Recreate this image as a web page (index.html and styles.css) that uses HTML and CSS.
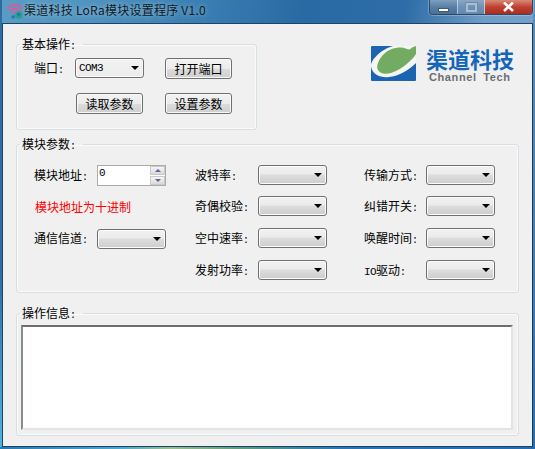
FILE: index.html
```html
<!DOCTYPE html>
<html lang="zh-CN">
<head>
<meta charset="utf-8">
<title>渠道科技 LoRa模块设置程序 V1.0</title>
<link rel="stylesheet" href="styles.css">
</head>
<body>
<div class="window">
  <header class="titlebar">
    <svg class="app-icon" width="17" height="16" viewBox="0 0 17 16">
      <g fill="none" stroke="#ee4f96" stroke-width="1.7" stroke-linecap="round">
        <path d="M1 5C4 1 12 1 15 5"/>
        <path d="M3.500 7.500C6 5 10 5 12.500 7.500"/>
        <path d="M6 10C7 9 9 9 10 10"/>
      </g>
      <circle cx="12" cy="12" r="3.800" fill="#25a08e"/>
      <path d="M10 10.500h3v2h-2z" fill="#2d5fa8"/>
      <path d="M4.500 12.500h3.500v3h-3.500z" fill="#1f7fa8"/>
    </svg>
    <span class="title">渠道科技 LoRa模块设置程序 V1.0</span>
    <div class="caption">
      <div class="cap cap-min"><i class="min-glyph"></i></div>
      <div class="cap cap-max"><i class="max-glyph"></i></div>
      <div class="cap cap-close"><svg width="13" height="10" viewBox="0 0 13 10"><path d="M2 0.500L11 9M11 0.500L2 9" stroke="#fff" stroke-width="2.600"/></svg></div>
    </div>
  </header>

  <main class="client">
    <div class="top-row">
      <fieldset class="group group-basic">
        <legend>基本操作<span class="lat">:</span></legend>
        <div class="basic-grid">
          <label>端口<span class="lat">:</span></label>
          <div class="combo"><span class="combo-text">COM3</span><i class="arrow"></i></div>
          <button class="btn btn-open">打开端口</button>
          <button class="btn btn-read">读取参数</button>
          <button class="btn btn-set">设置参数</button>
        </div>
      </fieldset>
      <div class="logo">
        <svg class="logo-mark" width="45" height="35" viewBox="0 0 45 35">
          <path d="M1 0H45V34a1 1 0 0 1-1 1H1a1 1 0 0 1-1-1V1a1 1 0 0 1 1-1Z" fill="#1b64b4"/>
          <path d="M22 0C11 3 0 13 0 20C1 29 10 32 18 31C28 30 38 24 45 17V0Z" fill="#f4f6f2"/>
          <path d="M7 17C10 9 17 3 25 2C30 1 34 2 36 3C38 4 40 3 41 1.500L45 0V8C41 14 32 23 20 27C13 29 8 27 6.500 23C6 21 6.200 19 7 17Z" fill="#74ab63"/>
        </svg>
        <div class="logo-text">
          <div class="logo-cn">渠道科技</div>
          <div class="logo-en">Channel Tech</div>
        </div>
      </div>
    </div>

    <fieldset class="group group-params">
      <legend>模块参数<span class="lat">:</span></legend>
      <div class="param-cols">
        <div class="param-col col-a">
          <label>模块地址<span class="lat">:</span></label>
          <div class="spin">
            <span class="spin-value">0</span>
            <div class="spin-btns">
              <div class="spin-btn"><i class="tri-up"></i></div>
              <div class="spin-btn"><i class="tri-down"></i></div>
            </div>
          </div>
          <div class="hint">模块地址为十进制</div>
          <label>通信信道<span class="lat">:</span></label>
          <div class="combo combo-end"><i class="arrow"></i></div>
        </div>
        <div class="param-col col-b">
          <label>波特率<span class="lat">:</span></label>
          <div class="combo"><i class="arrow"></i></div>
          <label>奇偶校验<span class="lat">:</span></label>
          <div class="combo"><i class="arrow"></i></div>
          <label>空中速率<span class="lat">:</span></label>
          <div class="combo"><i class="arrow"></i></div>
          <label>发射功率<span class="lat">:</span></label>
          <div class="combo"><i class="arrow"></i></div>
        </div>
        <div class="param-col col-c">
          <label>传输方式<span class="lat">:</span></label>
          <div class="combo"><i class="arrow"></i></div>
          <label>纠错开关<span class="lat">:</span></label>
          <div class="combo"><i class="arrow"></i></div>
          <label>唤醒时间<span class="lat">:</span></label>
          <div class="combo"><i class="arrow"></i></div>
          <label><span class="lat-wide">IO</span>驱动<span class="lat">:</span></label>
          <div class="combo"><i class="arrow"></i></div>
        </div>
      </div>
    </fieldset>

    <fieldset class="group group-log">
      <legend>操作信息<span class="lat">:</span></legend>
      <textarea class="log" aria-label="操作信息"></textarea>
    </fieldset>
  </main>
</div>
</body>
</html>
```

FILE: styles.css
```css
* { box-sizing: border-box; }
html, body { margin: 0; padding: 0; }
body {
  width: 535px;
  height: 449px;
  overflow: hidden;
  font-family: "Noto Sans CJK SC", "Liberation Sans", sans-serif;
  font-size: 12px;
  color: #000;
}
.window {
  width: 535px;
  height: 449px;
  display: flex;
  flex-direction: column;
  padding: 0 2px 2px;
  background:
    linear-gradient(90deg, #2a78ae 0, #4aa8cf 120px, #9dbf8a 170px, #5f9c78 240px, #2a76b4 340px, #1f6cb4 100%) bottom / 100% 2px no-repeat,
    linear-gradient(180deg, #2c6da3 0, #2c6da3 60%, #52b4dc 100%) left / 2px 100% no-repeat,
    linear-gradient(180deg, #5d8fb8 0, #2a6fae 100%) right / 2px 100% no-repeat,
    linear-gradient(100deg, #5b9cc4 0, #4f93c0 90px, #3a7eb2 200px, #2a6aa4 300px, #2d6ca6 400px, #6f9cc6 480px, #7ba4cb 100%);
}
.titlebar {
  height: 23px;
  flex: none;
  display: flex;
  align-items: flex-start;
  margin: 0 -2px;
  padding-left: 7px;
}
.app-icon { margin-top: 3px; flex: none; }
.title {
  line-height: 20px;
  letter-spacing: .25px;
  color: #0c1a26;
  text-shadow: 0 0 5px rgba(255, 255, 255, .55);
  white-space: nowrap;
}
.caption {
  margin-left: auto;
  margin-right: 2px;
  display: flex;
  height: 15px;
  border: 1px solid #2b4a6b;
  border-top: 0;
  border-radius: 0 0 4px 4px;
  overflow: hidden;
  box-shadow: 0 0 0 1px rgba(255, 255, 255, .25);
}
.cap {
  height: 14px;
  display: flex;
  align-items: center;
  justify-content: center;
  border-right: 1px solid rgba(255, 255, 255, .55);
}
.cap-min { width: 28px; background: linear-gradient(180deg, #7f9fbe, #577fa6 50%, #4a7098); }
.cap-max { width: 27px; background: linear-gradient(180deg, #8aa8c6, #6d92b6 50%, #6388ae); }
.cap-close { width: 47px; border-right: 0; background: linear-gradient(180deg, #d88a78, #c0402e 50%, #a82e22); }
.min-glyph { width: 11px; height: 4px; margin-top: 5px; background: #fff; border: 1px solid #44586e; display: block; }
.max-glyph { width: 11px; height: 9px; border: 2px solid #a9bdd2; outline: 1px solid #6e8cab; display: block; }

.client {
  flex: 1;
  display: flex;
  flex-direction: column;
  padding: 12px 13px 0;
  background: #f0f0f0;
  border: 1px solid #1d4468;
  border-right-color: #163a5c;
}
.top-row { display: flex; align-items: flex-start; }

.group {
  margin: 0;
  padding: 0;
  min-width: 0;
  border: 1px solid #d6dfe6;
  border-radius: 3px;
  box-shadow: inset 0 0 0 1px #fafafa;
}
.group legend {
  margin-left: 3px;
  padding: 0 7px 0 2px;
  height: 16px;
  line-height: 16px;
  white-space: nowrap;
}
.lat {
  font-family: "Liberation Mono", monospace;
  font-size: 10px;
}
.lat-wide {
  font-family: "Liberation Mono", monospace;
  font-size: 11px;
  letter-spacing: -.6px;
}
label { line-height: 20px; white-space: nowrap; }

.group-basic { width: 241px; height: 94px; flex: none; }
.basic-grid {
  display: grid;
  grid-template-columns: 41px 69px 21px 67px;
  grid-template-rows: 21px 21px;
  row-gap: 14px;
  margin: 6px 0 0 17px;
}
.btn {
  width: 67px;
  height: 21px;
  padding: 0;
  font: inherit;
  color: #000;
  border: 1px solid #707070;
  border-radius: 3px;
  background: linear-gradient(180deg, #f3f3f3 0, #ebebeb 50%, #dcdcdc 50%, #cfcfcf 100%);
  box-shadow: inset 0 0 0 1px #f8f8f8;
}
.btn-open { grid-column: 4; }
.btn-read { grid-column: 2; justify-self: start; margin-left: 1px; }
.btn-set { grid-column: 4; }

.combo {
  width: 69px;
  height: 20px;
  display: flex;
  align-items: center;
  border: 1px solid #707070;
  border-radius: 3px;
  background: linear-gradient(180deg, #f2f2f2 0, #ebebeb 45%, #dddddd 50%, #cdcdcd 100%);
  box-shadow: inset 0 0 0 1px #fbfbfb;
}
.group-basic .combo { background: linear-gradient(180deg, #f2f2f2, #ececec); }
.combo-end { align-self: end; }
.combo-text {
  margin-left: 3px;
  font-family: "Liberation Mono", monospace;
  font-size: 11px;
  letter-spacing: -.6px;
}
.arrow {
  margin-left: auto;
  margin-right: 4px;
  width: 0;
  height: 0;
  border-left: 4px solid transparent;
  border-right: 4px solid transparent;
  border-top: 4px solid #000;
}

.logo { display: flex; margin: 10px 0 0 114px; }
.logo-mark { flex: none; }
.logo-text { margin-left: 10px; width: 92px; }
.logo-cn {
  font-size: 22px;
  font-weight: 700;
  line-height: 24px;
  color: #1566b8;
  white-space: nowrap;
}
.logo-en {
  margin: 1px 0 0 3px;
  font-family: "Liberation Sans", sans-serif;
  font-size: 11px;
  font-weight: 700;
  line-height: 12px;
  letter-spacing: .6px;
  word-spacing: 3px;
  color: #6a6e72;
  white-space: nowrap;
}

.group-params { margin-top: 6px; height: 157px; }
.param-cols { display: flex; margin: 13px 0 0 17px; }
.param-col {
  display: grid;
  grid-template-rows: 20px 21px 21px 20px;
  row-gap: 11px;
  flex: none;
}
.col-a { grid-template-columns: 63px 69px; }
.col-b { grid-template-columns: 63px 69px; margin-left: 29px; }
.col-c { grid-template-columns: 62px 69px; margin-left: 37px; }
.hint { grid-column: 1 / -1; color: #f00; line-height: 21px; margin-left: 1px; }

.spin {
  width: 69px;
  height: 21px;
  display: flex;
  justify-content: space-between;
  background: #fff;
  border: 1px solid #ababab;
}
.spin-value {
  margin-left: 1px;
  font-family: "Liberation Mono", monospace;
  font-size: 11px;
  line-height: 14px;
}
.spin-btns { width: 15px; display: flex; flex-direction: column; gap: 1px; }
.spin-btn {
  flex: 1;
  display: flex;
  align-items: center;
  justify-content: center;
  border: 1px solid #c9c9c9;
  background: linear-gradient(180deg, #f6f6f6, #d9d9d9);
}
.tri-up, .tri-down {
  width: 0;
  height: 0;
  border-left: 3px solid transparent;
  border-right: 3px solid transparent;
}
.tri-up { border-bottom: 3px solid #56659c; }
.tri-down { border-top: 3px solid #56659c; }

.group-log { margin-top: 12px; height: 131px; }
.log {
  display: block;
  width: 492px;
  height: 105px;
  padding: 0;
  margin: 4px 0 0 4px;
  resize: none;
  background: #fff;
  border-style: solid;
  border-width: 2px;
  border-color: #6d6d6d #e3e3e3 #e3e3e3 #8a8a8a;
  border-radius: 0;
  outline: none;
}
```
